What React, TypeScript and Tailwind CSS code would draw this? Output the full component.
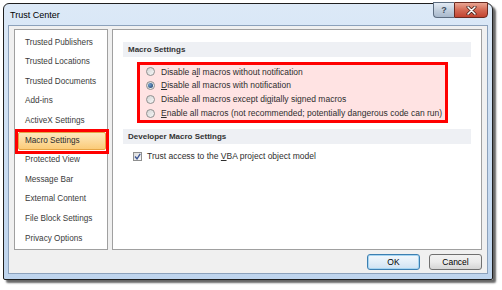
const navItems = [
  'Trusted Publishers',
  'Trusted Locations',
  'Trusted Documents',
  'Add-ins',
  'ActiveX Settings',
  'Macro Settings',
  'Protected View',
  'Message Bar',
  'External Content',
  'File Block Settings',
  'Privacy Options',
]

function Radio({ checked }: { checked?: boolean }) {
  return (
    <span className="w-[9px] h-[9px] shrink-0 rounded-full border border-[#8e8f8f] bg-gradient-to-br from-[#d4d4d4] to-[#f7f7f7] flex items-center justify-center">
      {checked && <span className="w-[5px] h-[5px] rounded-full bg-[radial-gradient(circle_at_35%_35%,#6f9fd0,#1b3a63)]" />}
    </span>
  )
}

function MacroOption({ before, mnemonic, after, checked }: { before: string; mnemonic: string; after: string; checked?: boolean }) {
  return (
    <div className="h-[13.75px] flex items-center gap-[6px]">
      <Radio checked={checked} />
      <span className="whitespace-nowrap">
        {before}
        <span className="underline underline-offset-[1px]">{mnemonic}</span>
        {after}
      </span>
    </div>
  )
}

export default function App() {
  return (
    <div className="w-[502px] h-[290px] bg-white pl-[3px] pt-[3px] font-['Liberation_Sans',Arial,sans-serif] text-[8.5px] leading-none">
      {/* Window */}
      <div className="w-[490px] h-[277px] flex flex-col rounded-t-[6px] rounded-b-[2px] border border-[#1f1f1f] bg-gradient-to-b from-[#dce9f7] via-[#cddff3] to-[#bed4ed] shadow-[3px_3px_2px_rgba(0,0,0,0.6)] px-[4px] pb-[5px]">
        {/* Title bar */}
        <div className="h-[21px] flex items-start">
          <span className="pl-[2px] pt-[7px] text-[9px] text-black">Trust Center</span>
          <div className="ml-auto -mt-[2px] flex">
            <div className="w-[21px] h-[16px] rounded-bl-[4px] border border-[#5d6d80] border-r-0 bg-gradient-to-b from-[#e3ebf4] via-[#c2cfdd] to-[#a9b9cc] flex items-center justify-center text-[9px] font-bold text-[#3d4b5c]">
              ?
            </div>
            <div className="w-[34px] h-[16px] rounded-br-[4px] border border-[#6b2a20] bg-gradient-to-b from-[#e8a593] via-[#d46a55] to-[#c24330] flex items-center justify-center">
              <svg width="11" height="9" viewBox="0 0 11 9">
                <path d="M2 1 L9 8 M9 1 L2 8" stroke="#3a1a14" strokeWidth="3" strokeLinecap="round" />
                <path d="M2 1 L9 8 M9 1 L2 8" stroke="#ffffff" strokeWidth="1.6" strokeLinecap="round" />
              </svg>
            </div>
          </div>
        </div>

        {/* Client area */}
        <div className="flex-1 flex flex-col border border-[#8ca1bb] bg-[#f0f0f0] pl-[5px] pr-[5px] pt-[3px]">
          <div className="flex gap-[4px] h-[221px]">
            {/* Left nav */}
            <div className="w-[94px] shrink-0 border border-[#a0a0a0] bg-white pt-[3px] text-[8.2px] text-[#3b3b3b]">
              {navItems.map((item) =>
                item === 'Macro Settings' ? (
                  <div key={item} className="relative h-[19.6px] flex items-center">
                    <div className="ml-[3px] mr-[1px] flex-1 h-[18px] flex items-center pl-[6px] rounded-[2px] border border-[#e5a444] bg-gradient-to-b from-[#fde9bd] to-[#fbcb78] text-[#2b2b2b] whitespace-nowrap">
                      {item}
                    </div>
                    {/* annotation */}
                    <div className="absolute left-[0px] -right-[2px] -top-[2px] -bottom-[3px] border-[3px] border-[#ff0000]" />
                  </div>
                ) : (
                  <div key={item} className="h-[19.6px] flex items-center pl-[10px] whitespace-nowrap">
                    {item}
                  </div>
                ),
              )}
            </div>

            {/* Right content */}
            <div className="flex-1 border border-[#a0a0a0] bg-white pt-[12px] px-[10px] text-[#2e2e2e]">
              <div className="h-[15px] bg-[#eef0f4] flex items-center pl-[5px] font-bold text-[8px] text-[#333]">
                Macro Settings
              </div>

              <div className="mt-[5px] ml-[14px] w-[311px] border-[3px] border-[#ff0000] bg-[#ffe3e3] pl-[6px]">
                <MacroOption before="Disable a" mnemonic="l" after="l macros without notification" />
                <MacroOption before="" mnemonic="D" after="isable all macros with notification" checked />
                <MacroOption before="Disable all macros except di" mnemonic="g" after="itally signed macros" />
                <MacroOption before="" mnemonic="E" after="nable all macros (not recommended; potentially dangerous code can run)" />
              </div>

              <div className="mt-[6px] h-[15px] bg-[#eef0f4] flex items-center pl-[5px] font-bold text-[8px] text-[#333]">
                Developer Macro Settings
              </div>

              <div className="mt-[8px] ml-[10px] flex items-center gap-[5px]">
                <span className="w-[9px] h-[9px] border border-[#8e8f8f] bg-gradient-to-br from-[#dcdcdc] to-[#f8f8f8] flex items-center justify-center">
                  <svg width="7" height="7" viewBox="0 0 7 7">
                    <path d="M1 3.5 L3 5.8 L6.2 0.8" fill="none" stroke="#3b5594" strokeWidth="1.3" />
                  </svg>
                </span>
                <span className="whitespace-nowrap">
                  Trust access to the <span className="underline underline-offset-[1px]">V</span>BA project object model
                </span>
              </div>
            </div>
          </div>

          {/* Buttons */}
          <div className="mt-[4px] flex justify-end gap-[9px]">
            <button className="w-[53px] h-[16px] rounded-[3px] border border-[#3c7fb1] bg-gradient-to-b from-[#f3f8fc] via-[#e2eef8] to-[#cfe2f2] text-[8.5px] text-black shadow-[inset_0_0_0_1px_#a6d5f2]">
              OK
            </button>
            <button className="w-[53px] h-[16px] rounded-[3px] border border-[#707070] bg-gradient-to-b from-[#f2f2f2] via-[#ebebeb] to-[#d5d5d5] text-[8.5px] text-black">
              Cancel
            </button>
          </div>
        </div>
      </div>
    </div>
  )
}
